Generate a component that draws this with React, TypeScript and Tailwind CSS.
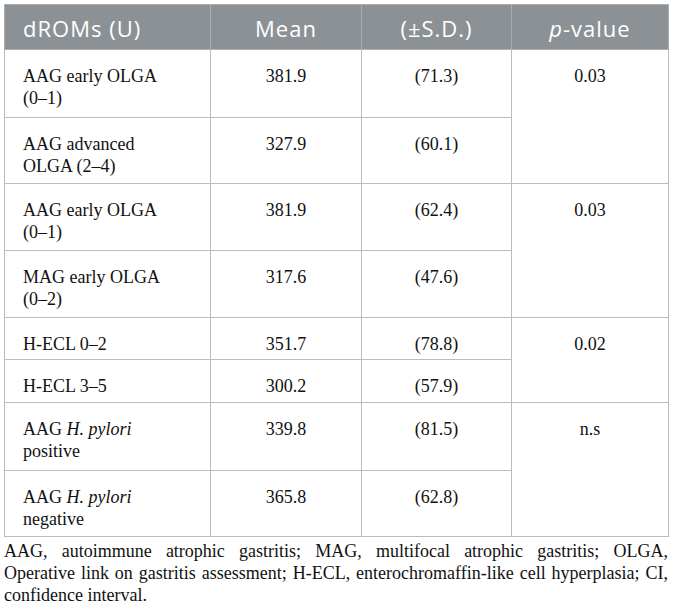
import React from "react";

const rows = [
  { label: <>AAG early OLGA<br />(0–1)</>, mean: "381.9", sd: "(71.3)", p: "0.03", span: 2, h: "h-[68px]" },
  { label: <>AAG advanced<br />OLGA (2–4)</>, mean: "327.9", sd: "(60.1)", h: "h-[66px]" },
  { label: <>AAG early OLGA<br />(0–1)</>, mean: "381.9", sd: "(62.4)", p: "0.03", span: 2, h: "h-[67px]" },
  { label: <>MAG early OLGA<br />(0–2)</>, mean: "317.6", sd: "(47.6)", h: "h-[67px]" },
  { label: <>H-ECL 0–2</>, mean: "351.7", sd: "(78.8)", p: "0.02", span: 2, h: "h-[42px]" },
  { label: <>H-ECL 3–5</>, mean: "300.2", sd: "(57.9)", h: "h-[43px]" },
  { label: <>AAG <i>H. pylori</i><br />positive</>, mean: "339.8", sd: "(81.5)", p: "n.s", span: 2, h: "h-[68px]" },
  { label: <>AAG <i>H. pylori</i><br />negative</>, mean: "365.8", sd: "(62.8)", h: "h-[66px]" },
];

const cell = "border border-[#bcbcbc] align-top pt-[15px] leading-[22px]";

export default function App() {
  return (
    <div className="bg-white p-[4px] w-[673px] min-h-[615px]">
      <table
        className="table-fixed border-collapse w-[664px] text-[18px] text-[#111]"
        style={{ fontFamily: '"Liberation Serif", "Times New Roman", serif' }}
      >
        <colgroup>
          <col className="w-[206px]" />
          <col className="w-[151px]" />
          <col className="w-[150px]" />
          <col className="w-[157px]" />
        </colgroup>
        <thead>
          <tr
            className="h-[45px] bg-[#8b9195] text-white text-[22px] tracking-[1px]"
            style={{ fontFamily: '"Open Sans", "Noto Sans", sans-serif' }}
          >
            <th className="border border-[#a9aeb1] font-normal text-left pl-[18px] pt-[2px]">dROMs (U)</th>
            <th className="border border-[#a9aeb1] font-normal text-center pt-[2px]">Mean</th>
            <th className="border border-[#a9aeb1] font-normal text-center pt-[2px]">(±S.D.)</th>
            <th className="border border-[#a9aeb1] font-normal text-center pt-[2px]">
              <i>p</i>-value
            </th>
          </tr>
        </thead>
        <tbody>
          {rows.map((r, i) => (
            <tr key={i} className={r.h}>
              <td className={`${cell} text-left pl-[18px]`}>{r.label}</td>
              <td className={`${cell} text-center`}>{r.mean}</td>
              <td className={`${cell} text-center`}>{r.sd}</td>
              {r.p && (
                <td rowSpan={r.span} className={`${cell} text-center`}>
                  {r.p}
                </td>
              )}
            </tr>
          ))}
        </tbody>
      </table>
      <div
        className="mt-[3px] w-[664px] text-[18px] leading-[22px] text-[#111] text-justify"
        style={{ fontFamily: '"Liberation Serif", "Times New Roman", serif' }}
      >
        <div className="[text-align-last:justify]">
          AAG, autoimmune atrophic gastritis; MAG, multifocal atrophic gastritis; OLGA,
        </div>
        <div className="[text-align-last:justify]">
          Operative link on gastritis assessment; H-ECL, enterochromaffin-like cell hyperplasia; CI,
        </div>
        <div>confidence interval.</div>
      </div>
    </div>
  );
}
